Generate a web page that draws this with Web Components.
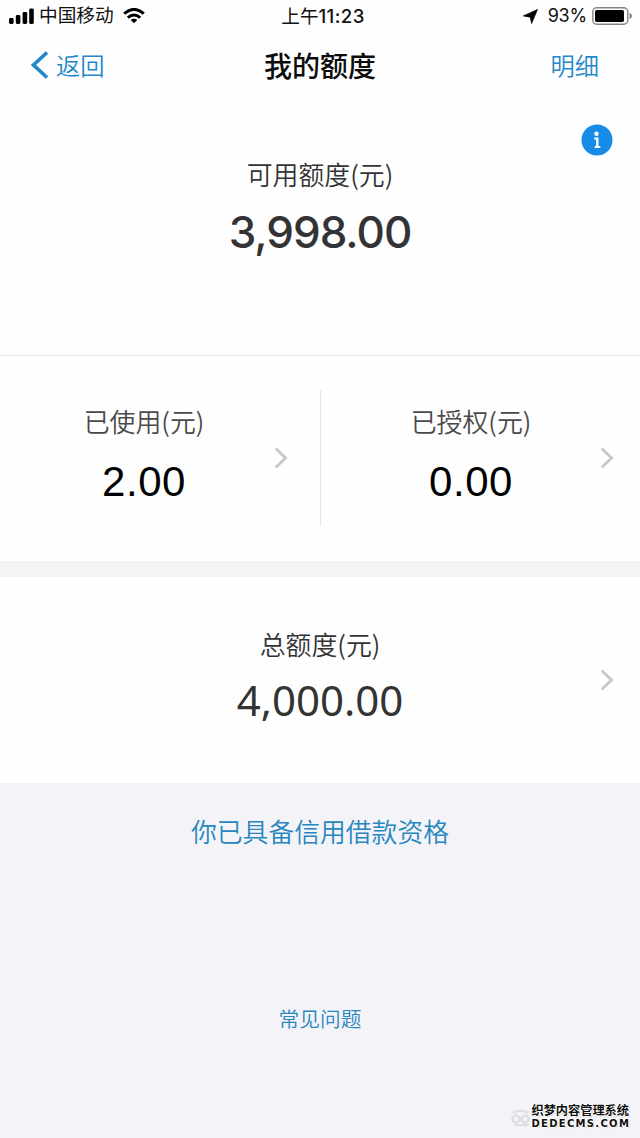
<!DOCTYPE html>
<html lang="zh-CN">
<head>
<meta charset="utf-8">
<meta name="viewport" content="width=device-width, initial-scale=1">
<title>我的额度</title>
<style>
    body
    {
        margin          : 0;
        background      : #f3f3f8;
        font-family     : "Liberation Sans", "Noto Sans CJK SC", sans-serif;
    }
</style>
</head>
<body>
<quota-page></quota-page>

<script>
class StatusBar extends HTMLElement
{
    constructor()
    {
        super();
        this.shadowDOM = this.attachShadow({mode:"open"});
    }

    connectedCallback()
    {
        this.shadowDOM.innerHTML =
        `
        <style>
            :host
            {
                display         : grid;
                grid-template-columns: 1fr auto 1fr;
                grid-template-rows: 32px;
                align-items     : center;
                height          : 32px;
                padding         : 0 8px 0 9px;
                box-sizing      : border-box;
                color           : #111;
                font            : 18.7px/30px Inter, "Noto Sans CJK SC", sans-serif;
                white-space     : nowrap;
            }

            .side
            {
                display         : flex;
                align-items     : center;
            }

            .right
            {
                justify-content : flex-end;
            }

            .carrier
            {
                margin          : 0 9px 0 5px;
            }

            .time
            {
                font-size       : 18.6px;
                font-weight     : 500;
                letter-spacing  : 0.4px;
                padding-left    : 5px;
            }

            .ampm
            {
                font-weight     : 400;
                letter-spacing  : 0;
            }

            .percent
            {
                margin          : 0 5px 0 10px;
                font-size       : 18px;
                letter-spacing  : -0.2px;
            }

            svg
            {
                display         : block;
                flex            : none;
            }
        </style>

        <div class="side">
            <svg width="25" height="16" viewBox="0 0 25 16" fill="#000">
                <rect x="0" y="10" width="4.6" height="6" rx="1.4"/>
                <rect x="6.8" y="7" width="4.6" height="9" rx="1.4"/>
                <rect x="13.6" y="4" width="4.6" height="12" rx="1.4"/>
                <rect x="20.2" y="0.5" width="4.6" height="15.5" rx="1.4"/>
            </svg>
            <span class="carrier">中国移动</span>
            <svg width="22" height="16" viewBox="0 0 22 16" fill="none" stroke="#000" stroke-width="3">
                <path d="M1.2 5.6Q11-2.8 20.8 5.6"/>
                <path d="M4.8 9.7Q11 4.4 17.2 9.7"/>
                <path d="M11 15.3L7.7 12Q11 9.5 14.3 12Z" fill="#000" stroke="none"/>
            </svg>
        </div>
        <div class="time"><span class="ampm">上午</span>11:23</div>
        <div class="side right">
            <svg width="15" height="15" viewBox="0 0 15 15"><path d="M14.5 0.5L8.6 14.5L7.3 8.2L0.3 6.9Z" fill="#000" stroke="#000" stroke-width="0.7" stroke-linejoin="round"/></svg>
            <span class="percent">93%</span>
            <svg width="40" height="18" viewBox="0 0 40 18">
                <rect x="0.8" y="0.8" width="35" height="16.4" rx="4" fill="none" stroke="#858585" stroke-width="1.4"/>
                <rect x="3" y="3" width="29" height="12" rx="1.8" fill="#000"/>
                <path d="M37.5 6Q40 6.5 40 9Q40 11.5 37.5 12Z" fill="#858585"/>
            </svg>
        </div>`;
    }
}

class NavBar extends HTMLElement
{
    constructor()
    {
        super();
        this.shadowDOM = this.attachShadow({mode:"open"});
    }

    connectedCallback()
    {
        this.shadowDOM.innerHTML =
        `
        <style>
            :host
            {
                display         : grid;
                grid-template-columns: 1fr auto 1fr;
                align-items     : center;
                height          : 66px;
                padding         : 0 41px 0 31px;
                box-sizing      : border-box;
                color           : #2388cb;
                font            : 350 24.3px/66px "Noto Sans CJK SC", sans-serif;
            }

            .back
            {
                display         : flex;
                align-items     : center;
                gap             : 7px;
            }

            .title
            {
                color           : #0c0c0c;
                font-size       : 28px;
                font-weight     : 500;
                padding-left    : 10px;
            }

            .detail
            {
                text-align      : right;
            }
        </style>

        <div class="back">
            <svg width="18" height="28" viewBox="0 0 18 28"><path d="M16 1.5L2.5 14L16 26.5" fill="none" stroke="#2388cb" stroke-width="3.6"/></svg>
            <slot name="back"></slot>
        </div>
        <div class="title"><slot></slot></div>
        <div class="detail"><slot name="detail"></slot></div>`;
    }
}

class ChevronIcon extends HTMLElement
{
    constructor()
    {
        super();
        this.shadowDOM = this.attachShadow({mode:"open"});
    }

    connectedCallback()
    {
        this.shadowDOM.innerHTML =
        `
        <style>
            :host
            {
                display         : block;
                width           : 14px;
                height          : 22px;
            }

            svg
            {
                display         : block;
            }
        </style>
        <svg width="14" height="22" viewBox="0 0 14 22"><path d="M1.7 1.5L11.6 11L1.7 20.5" fill="none" stroke="#c8c8c8" stroke-width="2.8"/></svg>`;
    }
}

class AmountBlock extends HTMLElement
{
    constructor()
    {
        super();
        this.shadowDOM = this.attachShadow({mode:"open"});
    }

    connectedCallback()
    {
        this.shadowDOM.innerHTML =
        `
        <style>
            :host
            {
                display         : flex;
                flex-direction  : column;
                align-items     : center;
                white-space     : nowrap;
            }

            .label
            {
                font            : 350 25.9px/36px "Noto Sans CJK SC", sans-serif;
                color           : var(--label-color, #333);
            }

            .value
            {
                margin-top      : var(--value-gap, 16px);
                font            : var(--value-font);
                line-height     : 50px;
                letter-spacing  : var(--value-spacing, 0);
                color           : var(--value-color, #000);
            }
        </style>
        <div class="label">${this.getAttribute("label")}</div>
        <div class="value"><slot></slot></div>`;
    }
}

class SiteMark extends HTMLElement
{
    constructor()
    {
        super();
        this.shadowDOM = this.attachShadow({mode:"open"});
    }

    connectedCallback()
    {
        this.shadowDOM.innerHTML =
        `
        <style>
            :host
            {
                position        : absolute;
                right           : 11px;
                bottom          : 8px;
                display         : flex;
                align-items     : center;
                gap             : 1px;
                color           : #111;
                white-space     : nowrap;
                text-shadow     : 1px 0 #fff, -1px 0 #fff, 0 1px #fff, 0 -1px #fff, 1px 1px 1px #bbb;
            }

            .cn
            {
                font            : 700 12.2px/15px "Noto Sans CJK SC", sans-serif;
            }

            .en
            {
                font            : 700 10px/12px "DejaVu Sans", sans-serif;
                letter-spacing  : 1.3px;
                margin-right    : -2px;
            }
        </style>
        <svg width="20" height="20" viewBox="0 0 20 20" fill="none" stroke="#dedee3" stroke-width="2.4">
            <circle cx="5" cy="12" r="3.5"/>
            <circle cx="14" cy="12" r="3.5"/>
            <path d="M2 6Q9 1 17 6M3 18H18"/>
        </svg>
        <div>
            <div class="cn">织梦内容管理系统</div>
            <div class="en">DEDECMS.COM</div>
        </div>`;
    }
}

class QuotaPage extends HTMLElement
{
    constructor()
    {
        super();
        this.shadowDOM = this.attachShadow({mode:"open"});
    }

    connectedCallback()
    {
        this.shadowDOM.innerHTML =
        `
        <style>
            :host
            {
                display         : flex;
                flex-direction  : column;
                position        : relative;
                width           : 640px;
                height          : 1138px;
                overflow        : hidden;
            }

            header, section
            {
                background      : #fefefe;
            }

            .available
            {
                display         : flex;
                flex-direction  : column;
                height          : 257px;
                border-bottom   : 1px solid #e3e3e3;
            }

            .info
            {
                align-self      : flex-end;
                margin          : 26px 27px 0 0;
                display         : block;
                height          : 32px;
            }

            .available amount-block
            {
                --value-font    : 500 44px Inter;
                --value-spacing : -1px;
                --value-color   : #333336;
                --value-gap     : 15px;
            }

            .split
            {
                display         : grid;
                grid-template-columns: 320px 320px;
                height          : 205px;
            }

            .cell
            {
                display         : grid;
                grid-template-columns: 1fr 14px;
                height          : 136px;
                margin-top      : 34px;
                padding         : 0 32px 0 14px;
                box-sizing      : border-box;
            }

            .cell + .cell
            {
                border-left     : 1px solid #e6e6e6;
                padding         : 0 26px 0 21px;
            }

            .cell amount-block
            {
                padding-top     : 13px;
                --value-font    : 400 42px "Liberation Sans";
                --value-gap     : 18px;
                --value-spacing : 0.6px;
                --label-color   : #4a4a4a;
            }

            .cell chevron-icon
            {
                margin-top      : 57px;
            }

            .band
            {
                height          : 16px;
                background      : #f4f4f4;
            }

            .total
            {
                display         : grid;
                grid-template-columns: 1fr 14px;
                height          : 206px;
                padding         : 0 26px 0 40px;
            }

            .total amount-block
            {
                padding-top     : 49px;
                --value-font    : 400 42px "Noto Sans";
                --value-color   : #333;
                --value-gap     : 13px;
            }

            .total chevron-icon
            {
                margin-top      : 92px;
            }

            footer
            {
                display         : flex;
                flex-direction  : column;
                align-items     : center;
                padding-top     : 29px;
                color           : #2787be;
                font            : 350 25.8px/38px "Noto Sans CJK SC", sans-serif;
            }

            .faq
            {
                margin-top      : 153px;
                font-size       : 20.7px;
                line-height     : 30px;
            }
        </style>

        <header>
            <status-bar></status-bar>
            <nav-bar>
                <span slot="back">返回</span>
                我的额度
                <span slot="detail">明细</span>
            </nav-bar>
        </header>

        <section class="available">
            <svg class="info" width="32" height="32" viewBox="0 0 32 32">
                <circle cx="16" cy="16" r="15.5" fill="#168ce8"/>
                <circle cx="15.5" cy="9.8" r="2.2" fill="#fff"/>
                <path d="M13.2 13.5H17.5V22H19.3V24H13.7V22H15V15.5H13.2Z" fill="#fff"/>
            </svg>
            <amount-block label="可用额度(元)">3,998.00</amount-block>
        </section>

        <section class="split">
            <div class="cell">
                <amount-block label="已使用(元)">2.00</amount-block>
                <chevron-icon></chevron-icon>
            </div>
            <div class="cell">
                <amount-block label="已授权(元)">0.00</amount-block>
                <chevron-icon></chevron-icon>
            </div>
        </section>

        <div class="band"></div>

        <section class="total">
            <amount-block label="总额度(元)">4,000.00</amount-block>
            <chevron-icon></chevron-icon>
        </section>

        <footer>
            <div>你已具备信用借款资格</div>
            <div class="faq">常见问题</div>
        </footer>

        <site-mark></site-mark>`;
    }
}

customElements.define("status-bar",StatusBar);
customElements.define("nav-bar",NavBar);
customElements.define("chevron-icon",ChevronIcon);
customElements.define("amount-block",AmountBlock);
customElements.define("site-mark",SiteMark);
customElements.define("quota-page",QuotaPage);
</script>
</body>
</html>
